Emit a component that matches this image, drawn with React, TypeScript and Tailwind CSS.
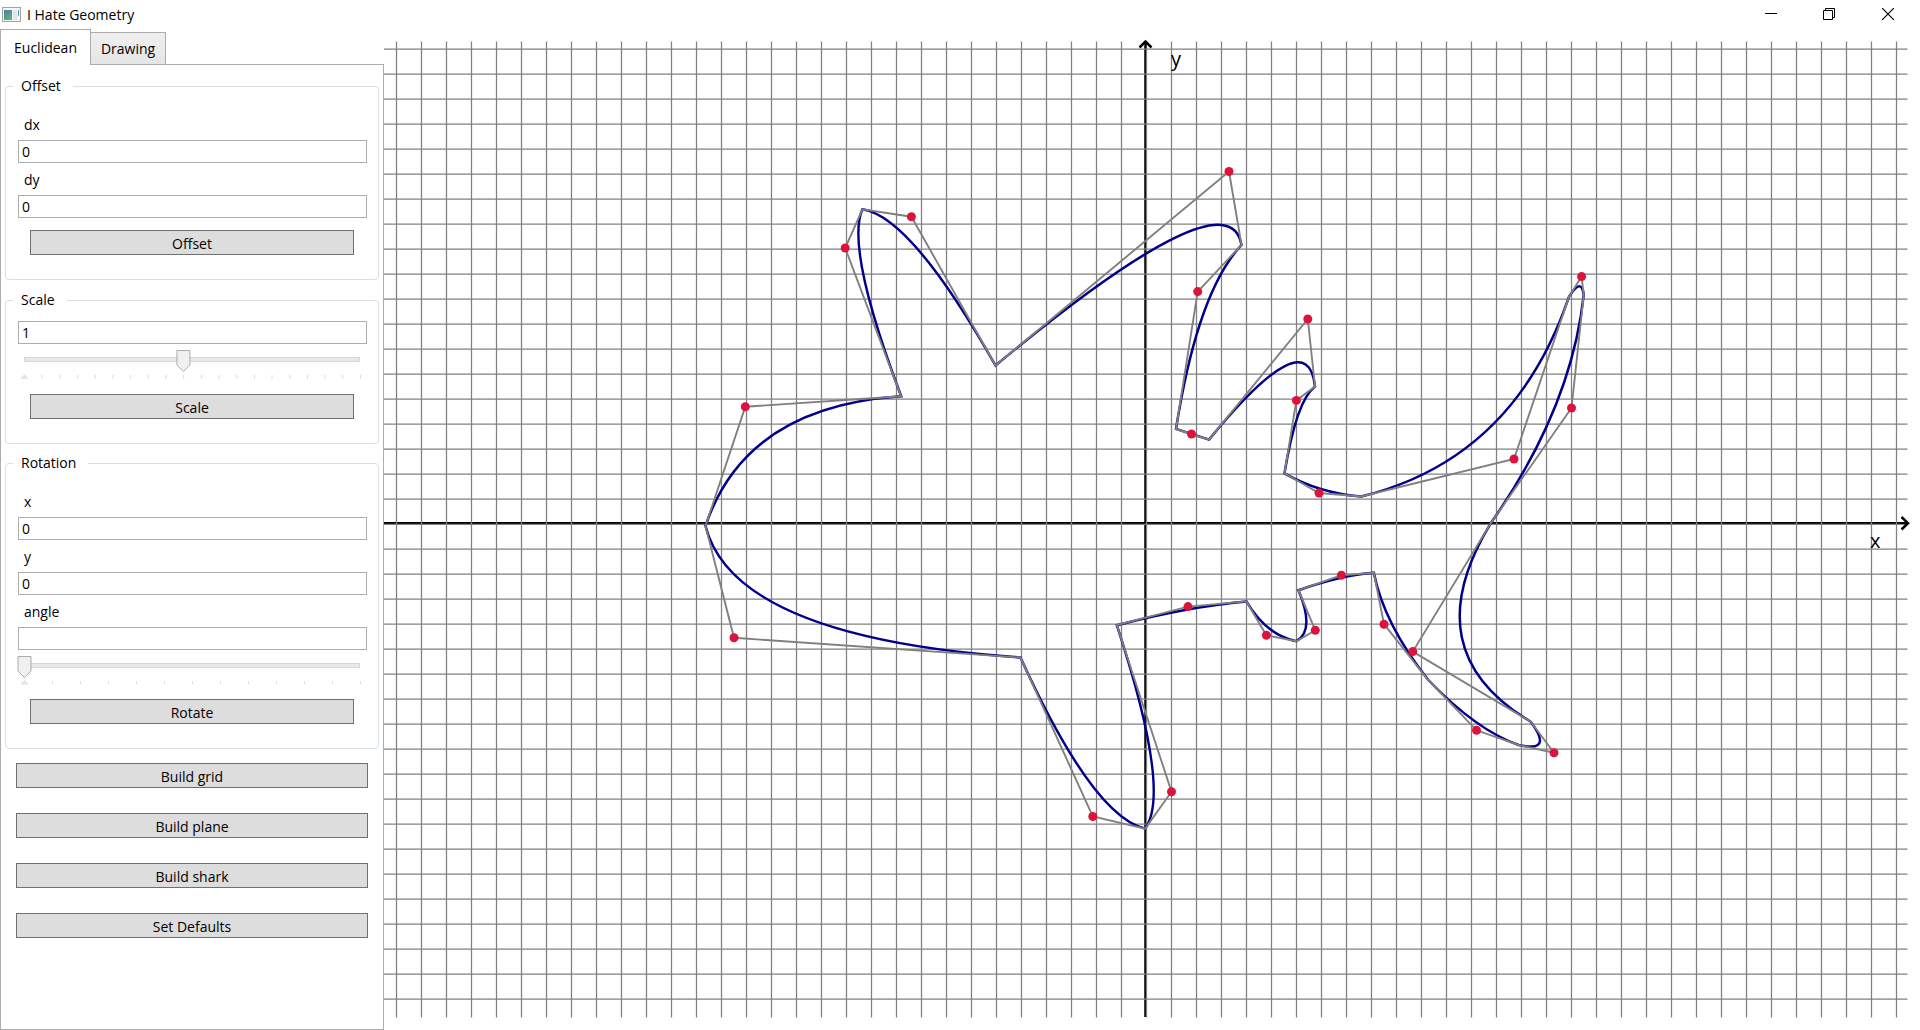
import { useState } from "react";
import type { ReactNode } from "react";

type Point = [number, number];

/* Closed outline: each entry is a control point followed by the next anchor. */
const START: Point = [705.5, 526];
const SEGMENTS: [Point, Point][] = [
  [[745.3, 406.7], [901.2, 396.3]],
  [[845.2, 248], [862.4, 209.3]],
  [[911.4, 216.7], [995.5, 365.5]],
  [[1229, 171.5], [1241.5, 245]],
  [[1197.7, 291.6], [1176, 429]],
  [[1191.5, 434], [1209, 439.6]],
  [[1307.8, 319], [1315, 386.5]],
  [[1296.4, 400.4], [1284.5, 473.3]],
  [[1319, 493], [1361.3, 496.5]],
  [[1514, 459], [1569, 296.7]],
  [[1581.6, 276.6], [1583.7, 295]],
  [[1571.5, 408], [1490.7, 523.3]],
  [[1412.8, 651.6], [1530.7, 721.7]],
  [[1554, 752.8], [1518.7, 745]],
  [[1476.5, 730.3], [1428.3, 680]],
  [[1384, 624.2], [1373.8, 572.8]],
  [[1341.4, 575.3], [1298.5, 590.2]],
  [[1315.3, 630.3], [1296.4, 641.2]],
  [[1266.4, 635.3], [1246.4, 601.4]],
  [[1188, 606.6], [1116.8, 625.2]],
  [[1171.5, 791.7], [1145.2, 828.6]],
  [[1092.8, 816.5], [1020.5, 657.5]],
  [[734, 637.8], START],
];

const curve = `M${START} ` + SEGMENTS.map(([c, a]) => `Q${c} ${a}`).join(" ") + "Z";
const frame = `M${START} ` + SEGMENTS.map(([c, a]) => `L${c} L${a}`).join(" ") + "Z";
const columns = Array.from({ length: 61 }, (_, i) => 396.5 + i * 25);
const rows = Array.from({ length: 39 }, (_, i) => 49 + i * 25);

function Plane() {
  return (
    <svg
      className="block h-full w-full"
      viewBox="384 29 1536 1001"
      preserveAspectRatio="xMinYMin meet"
      role="img"
      aria-label="Coordinate plane with a shark outline"
    >
      <g stroke="#000" strokeWidth="2.5" fill="none">
        <path d="M384 523.2H1908M1145.5 1017V42" />
        <path d="M1901.5 517L1908 523.2L1901.5 529.5M1139.5 47.5L1145.5 41.5L1151.5 47.5" />
      </g>
      <g stroke="#808080" strokeWidth="1.25">
        {columns.map((x) => (
          <line key={x} x1={x} y1={x === 1146.5 ? 50 : 41.5} x2={x} y2="1017.5" />
        ))}
        {rows.map((y) => (
          <line key={y} x1="384" y1={y === 524 ? 524.3 : y} x2={y === 524 ? 1900 : 1907.5} y2={y === 524 ? 524.3 : y} />
        ))}
      </g>
      <path d={curve} fill="none" stroke="#00008b" strokeWidth="2.5" />
      <path d={frame} fill="none" stroke="#808080" strokeWidth="1.9" />
      {SEGMENTS.map(([[cx, cy]]) => (
        <circle key={`${cx}-${cy}`} cx={cx} cy={cy} r="4.5" fill="#dc143c" />
      ))}
      <g fontFamily="'Open Sans', sans-serif" fontSize="20" fill="#000">
        <text x="1171" y="66">y</text>
        <text x="1870" y="548">x</text>
      </g>
    </svg>
  );
}

function Group({ title, children }: { title: string; children: ReactNode }) {
  return (
    <fieldset className="rounded border border-[#d5dfe5] px-3 pb-6">
      <legend className="-ml-[5px] pr-3 pl-2 leading-5">{title}</legend>
      {children}
    </fieldset>
  );
}

function Field({ id, label, value }: { id: string; label?: string; value: string }) {
  return (
    <div className="-mr-px">
      {label && (
        <label htmlFor={id} className="block h-8 pt-[7px] pl-[6px] leading-5">
          {label}
        </label>
      )}
      <input
        id={id}
        aria-label={label ?? id}
        defaultValue={value}
        className="block h-[23px] w-full border border-[#abadb3] bg-white px-[3px] leading-5 outline-none"
      />
    </div>
  );
}

function Slider({ label, start, steps, short }: { label: string; start: number; steps: number; short?: boolean }) {
  const [value, setValue] = useState(start);
  return (
    <div className={short ? "relative mt-[6px] h-[29px]" : "relative mt-[6px] h-[30px]"}>
      <div className="mx-[6px] h-full">
        <svg className="block h-full w-full overflow-visible">
          <rect x="0.5" y="7.5" width="99.7%" height="4" fill="#e7eaea" stroke="#d6d6d6" />
          {Array.from({ length: steps }, (_, i) => (
            <rect key={i} x={`${((i + 1) * 100) / steps}%`} y="25" width="1" height={short ? 3 : 4} fill="#dcdcdc" />
          ))}
          <path d={short ? "M-4 28.500L0.500 24L5 28.500Z" : "M-4 29L0.500 24L5 29Z"} fill="#e5e5e5" />
          <svg x={`${value}%`} className="overflow-visible">
            <path d="M-6 0.500H7V15L0.500 21.500L-6 15Z" fill="#f0f0f0" stroke="#acacac" />
          </svg>
        </svg>
      </div>
      <input
        type="range"
        aria-label={label}
        min={0}
        max={100}
        step="any"
        value={value}
        onChange={(e) => setValue(Number(e.target.value))}
        className="absolute inset-0 h-6 w-full opacity-0"
      />
    </div>
  );
}

function Button({ children }: { children: ReactNode }) {
  return (
    <button type="button" className="block h-[25px] w-full border border-[#707070] bg-[#dddddd] pt-[2px] text-center leading-5">
      {children}
    </button>
  );
}

export default function App() {
  return (
    <div className="flex h-screen flex-col bg-white font-['Open_Sans',sans-serif] text-sm text-black">
      <header className="flex h-[29px] shrink-0 items-center">
        <svg className="ml-[2px]" width="19" height="16" aria-hidden="true">
          <defs>
            <linearGradient id="pane" x1="0" y1="0" x2="0.6" y2="1">
              <stop offset="0" stopColor="#4b7fa5" />
              <stop offset="1" stopColor="#5fae84" />
            </linearGradient>
          </defs>
          <rect x="0.5" y="0.5" width="18" height="14" fill="#f5f6f7" stroke="#9ca3aa" />
          <rect x="2" y="3" width="8" height="10" fill="url(#pane)" />
          <rect x="11" y="3" width="4" height="10" fill="#e3e6e8" />
          <rect x="16" y="3" width="1" height="6" fill="#5fa098" />
        </svg>
        <h1 className="ml-[6px] leading-5">I Hate Geometry</h1>
        <div className="ml-auto flex h-full pr-[2px] pb-px">
          <button type="button" aria-label="Minimize" className="grid h-full w-[58px] place-items-center">
            <svg width="12" height="12"><path d="M0 5.500H12" stroke="#000" /></svg>
          </button>
          <button type="button" aria-label="Restore" className="grid h-full w-[58px] place-items-center">
            <svg width="12" height="12" fill="none" stroke="#000"><path d="M0.500 2.500H9.500V11.500H0.500ZM2.500 2.500V0.500H11.500V9.500H9.500" /></svg>
          </button>
          <button type="button" aria-label="Close" className="grid h-full w-[60px] place-items-center">
            <svg width="12" height="12"><path d="M0 0L12 12M12 0L0 12" stroke="#000" strokeWidth="1.2" /></svg>
          </button>
        </div>
      </header>
      <div className="flex min-h-0 flex-1">
        <aside className="flex w-96 shrink-0 flex-col">
          <div role="tablist" className="flex h-[35px] items-end">
            <button type="button" role="tab" aria-selected="true" className="relative z-10 -mb-px h-9 w-[91px] border border-b-0 border-[#acacac] bg-white leading-5">
              Euclidean
            </button>
            <button type="button" role="tab" aria-selected="false" className="-mb-px h-[33px] w-[75px] border border-l-0 border-[#acacac] bg-linear-to-b from-[#f0f0f0] to-[#e5e5e5] leading-5">
              Drawing
            </button>
          </div>
          <div role="tabpanel" className="flex-1 border border-[#acacac] px-1 pt-[11px]">
            <Group title="Offset">
              <div className="pt-3">
                <Field id="dx" label="dx" value="0" />
                <Field id="dy" label="dy" value="0" />
              </div>
              <div className="px-3 pt-3">
                <Button>Offset</Button>
              </div>
            </Group>
            <div className="pt-[10px]">
              <Group title="Scale">
                <div className="pt-[11px]">
                  <Field id="scale" value="1" />
                </div>
                <Slider label="Scale factor" start={47.3} steps={19} />
                <div className="px-3 pt-[14px]">
                  <Button>Scale</Button>
                </div>
              </Group>
            </div>
            <div className="pt-[9px]">
              <Group title="Rotation">
                <div className="pt-3">
                  <Field id="x" label="x" value="0" />
                  <Field id="y" label="y" value="0" />
                  <Field id="angle" label="angle" value="" />
                </div>
                <Slider label="Rotation angle" start={0} steps={12} short />
                <div className="px-3 pt-[14px]">
                  <Button>Rotate</Button>
                </div>
              </Group>
            </div>
            <div className="flex flex-col gap-[25px] px-[11px] pt-[14px]">
              <Button>Build grid</Button>
              <Button>Build plane</Button>
              <Button>Build shark</Button>
              <Button>Set Defaults</Button>
            </div>
          </div>
        </aside>
        <main className="min-w-0 flex-1">
          <Plane />
        </main>
      </div>
    </div>
  );
}
